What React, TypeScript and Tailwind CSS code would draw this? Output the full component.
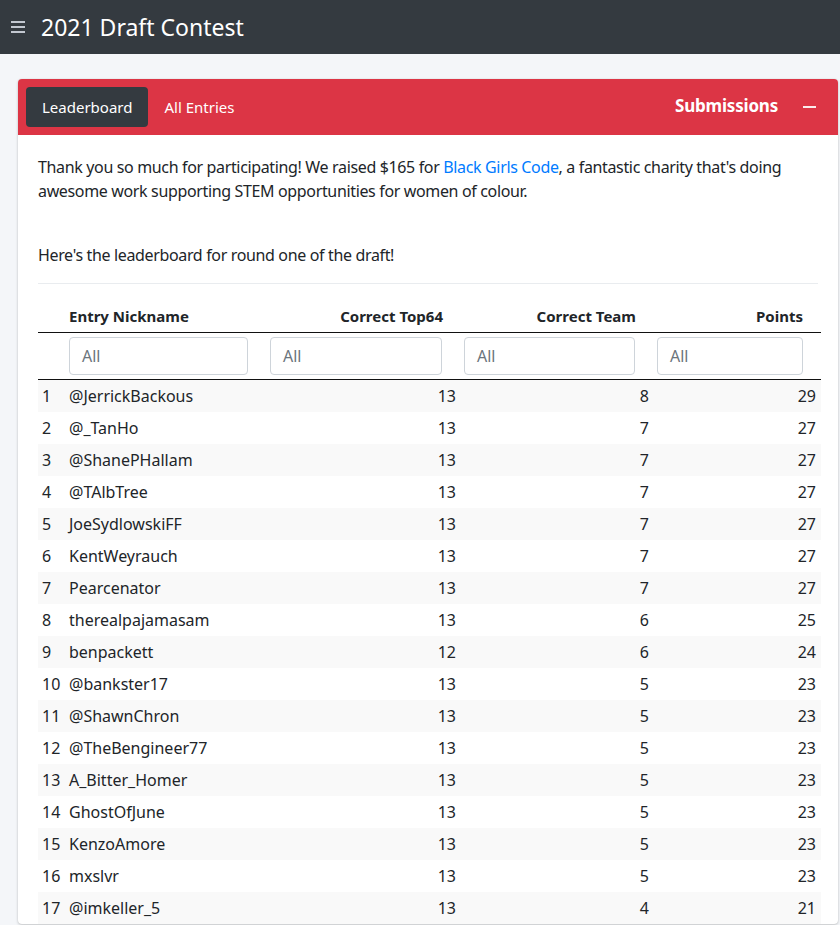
import React from 'react';

type Row = [string, number, number, number];

const rows: Row[] = [
  ['@JerrickBackous', 13, 8, 29],
  ['@_TanHo', 13, 7, 27],
  ['@ShanePHallam', 13, 7, 27],
  ['@TAlbTree', 13, 7, 27],
  ['JoeSydlowskiFF', 13, 7, 27],
  ['KentWeyrauch', 13, 7, 27],
  ['Pearcenator', 13, 7, 27],
  ['therealpajamasam', 13, 6, 25],
  ['benpackett', 12, 6, 24],
  ['@bankster17', 13, 5, 23],
  ['@ShawnChron', 13, 5, 23],
  ['@TheBengineer77', 13, 5, 23],
  ['A_Bitter_Homer', 13, 5, 23],
  ['GhostOfJune', 13, 5, 23],
  ['KenzoAmore', 13, 5, 23],
  ['mxslvr', 13, 5, 23],
  ['@imkeller_5', 13, 4, 21],
];

const cols = 'grid grid-cols-[27px_201px_194px_193px_168px]';

function Filter() {
  return (
    <div className="pl-1 pr-[18px] py-1">
      <div className="h-[38px] rounded border border-[#ced4da] bg-white px-3 flex items-center text-[16px] text-[#6c757d]">
        All
      </div>
    </div>
  );
}

export default function App() {
  return (
    <div className="min-h-screen bg-[#f4f6f9] text-[#212529] font-['Noto_Sans',sans-serif] overflow-hidden">
      <header className="h-[54px] bg-[#343a40] flex items-center">
        <div className="ml-[11px] w-[14px] flex flex-col gap-[3px]">
          <span className="h-[2px] bg-[#c2c7d0]" />
          <span className="h-[2px] bg-[#c2c7d0]" />
          <span className="h-[2px] bg-[#c2c7d0]" />
        </div>
        <h1 className="ml-[16px] text-[23px] text-white">2021 Draft Contest</h1>
      </header>

      <div className="pt-[25px] pl-[18px]">
        <div className="w-[820px] bg-white rounded shadow-[0_0_1px_rgba(0,0,0,0.125),0_1px_3px_rgba(0,0,0,0.2)]">
          <div className="h-[56px] bg-[#dc3545] rounded-t flex items-center px-2">
            <div className="h-10 px-4 rounded bg-[#343a40] text-white flex items-center text-[15px]">Leaderboard</div>
            <div className="px-4 text-white text-[15px]">All Entries</div>
            <div className="ml-auto text-white font-bold text-[17px] pb-[2px] tracking-[-0.2px]">Submissions</div>
            <div className="ml-[25px] mr-[14px] w-[13px] h-[2px] bg-white/90" />
          </div>

          <div className="px-5 pt-5">
            <p className="text-[16px] leading-6 tracking-[-0.35px]">
              Thank you so much for participating! We raised $165 for{' '}
              <span className="text-[#007bff]">Black Girls Code</span>, a fantastic charity that's doing awesome work
              supporting STEM opportunities for women of colour.
            </p>
            <p className="mt-10 text-[16px] leading-6 pb-4 border-b border-[#e9ecef] tracking-[-0.35px]">
              Here's the leaderboard for round one of the draft!
            </p>

            <div className="mt-[17px] w-[783px]">
              <div className={`${cols} border-b border-[#111] font-bold text-[15px] h-[32px] items-center`}>
                <div />
                <div className="pl-1">Entry Nickname</div>
                <div className="pr-[17px] text-right">Correct Top64</div>
                <div className="pr-[17px] text-right">Correct Team</div>
                <div className="pr-[18px] text-right">Points</div>
              </div>
              <div className={`${cols} border-b border-[#111] h-[47px] items-center`}>
                <div />
                <Filter />
                <Filter />
                <Filter />
                <Filter />
              </div>
              {rows.map((r, i) => (
                <div
                  key={r[0]}
                  className={`${cols} h-8 items-center text-[16px] ${i % 2 === 0 ? 'bg-[#f9f9f9]' : 'bg-white'}`}
                >
                  <div className="pl-1">{i + 1}</div>
                  <div className="pl-1">{r[0]}</div>
                  <div className="pr-1 text-right">{r[1]}</div>
                  <div className="pr-1 text-right">{r[2]}</div>
                  <div className="pr-[5px] text-right">{r[3]}</div>
                </div>
              ))}
            </div>
          </div>
        </div>
      </div>
    </div>
  );
}
